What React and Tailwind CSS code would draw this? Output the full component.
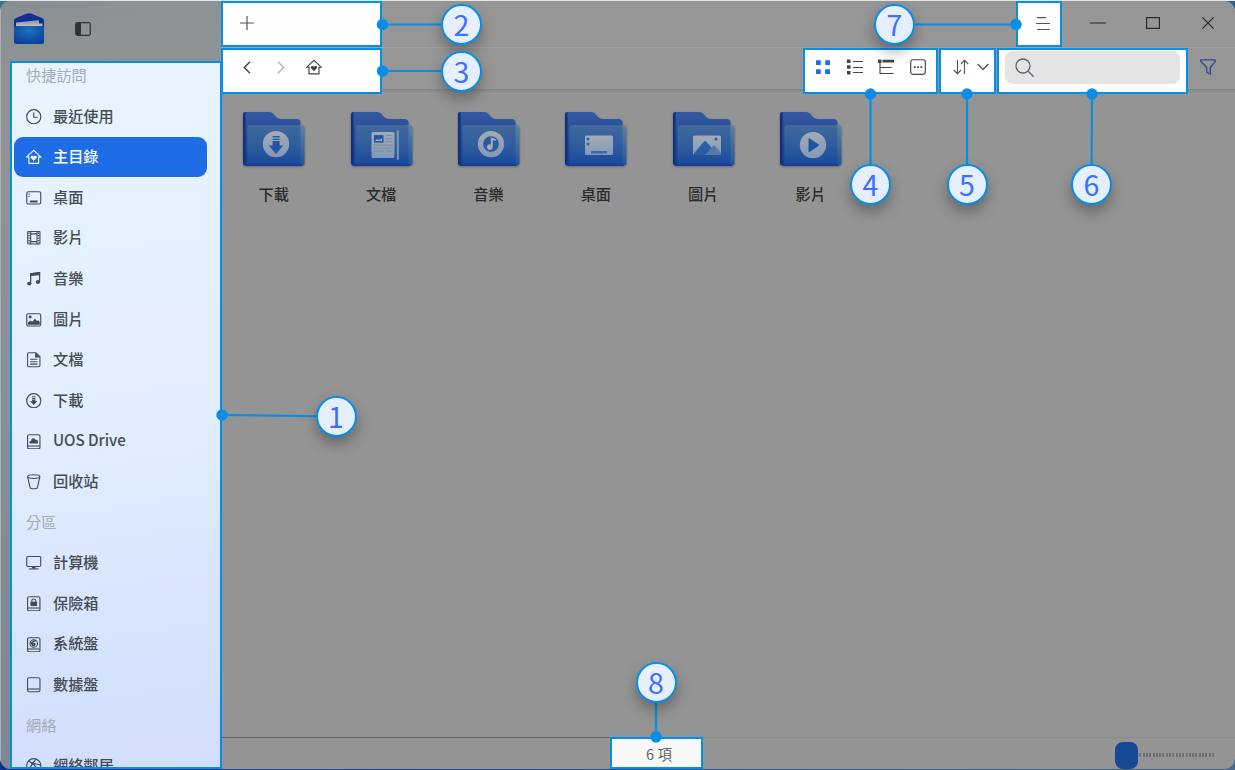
import React from "react";

const Icon = ({ children, className = "size-4" }) => (
  <svg viewBox="0 0 16 16" fill="none" stroke="currentColor" strokeWidth="1.15" strokeLinejoin="round" className={"shrink-0 " + className}>
    {children}
  </svg>
);

const solid = { fill: "currentColor", stroke: "none" };

const HomeShape = () => (
  <>
    <path d="M.8 8.2 8 1.3l7.2 6.9H13v6.6H3V8.2z" strokeLinejoin="miter" />
    <path {...solid} d="M8 12.2 4.9 9.1C4 7.6 6.5 6 8 7.8 9.5 6 12 7.6 11.1 9.1z" />
  </>
);

const Disk = ({ children }) => (
  <>
    <rect x="1.600" y=".8" width="12.800" height="14.400" rx="1.600" />
    <path d="M2 12.400h12" />
    {children}
  </>
);

const icons = {
  recent: (
    <>
      <circle cx="8" cy="8" r="7.3" />
      <path d="M8 3.6v4.9h4" />
    </>
  ),
  home: <HomeShape />,
  desktop: (
    <>
      <rect x=".8" y="1.8" width="14.4" height="12.6" rx="1.6" />
      <path {...solid} d="M4 10.800h8v2H4zM2.500 3.500h1.200v1.300H2.500zM2.500 6h1.200v1.300H2.500z" />
    </>
  ),
  video: (
    <>
      <rect x="1.8" y="1.5" width="12.6" height="13" rx=".8" />
      <path d="M4.8 1.5v13M11.4 1.5v13M4.8 4h6.6M4.8 12h6.6" />
      <path d="M3.2 2.6v11.2M13 2.6v11.2" strokeDasharray="1.2 1.4" strokeWidth="1.4" />
    </>
  ),
  music: (
    <>
      <path d="M4.8 13V2.9l9.2-1.2v9.6" strokeWidth="1.3" />
      <path {...solid} d="M4.2 2.400 14.600 1v3L4.200 5.300z" />
      <ellipse {...solid} cx="3.4" cy="13" rx="2.2" ry="2" />
      <ellipse {...solid} cx="12.3" cy="11.4" rx="2.2" ry="2" />
    </>
  ),
  picture: (
    <>
      <rect x=".8" y="1.8" width="14.4" height="12.6" rx="1.6" />
      <circle {...solid} cx="4.3" cy="5.2" r="1.5" />
      <path {...solid} d="M2 13.2v-2.5l2.7-1.8 1.7 1.2 2.8-3.2 2.2 2.3 1.2-.7 1.6 1.7v3z" />
    </>
  ),
  document: (
    <>
      <path d="M1.600 2.200Q1.600.8 3 .8H10l4.400 4.100v8.900q0 1.400-1.400 1.400H3q-1.400 0-1.400-1.400z" />
      <path {...solid} d="M9.300.8V5.700h5.100z" />
      <path d="M4.200 7.500h7.600M4.200 10h7.600M4.200 12.500h7.600" />
    </>
  ),
  download: (
    <>
      <circle cx="8" cy="8" r="7.3" />
      <path {...solid} d="M6.300 3.400h3.400v1H6.300zM6.300 5.100h3.400v1H6.300zM6.300 6.800h3.400v1.600h2L8 12.400 4.300 8.400h2z" />
    </>
  ),
  drive: (
    <Disk>
      <path {...solid} d="M4.200 9.800C2.700 9 3.700 6.800 5.200 7.200 5.200 3.800 9.200 3.400 9.900 6.100c2.200-.4 3.500 2.200 1.900 3.700z" />
    </Disk>
  ),
  trash: (
    <>
      <ellipse cx="8" cy="2.700" rx="6.300" ry="1.900" />
      <path d="M1.700 2.900 4 13q.4 2.200 2 2.200h4q1.600 0 2-2.200l2.300-10.100" />
    </>
  ),
  computer: (
    <>
      <rect x=".8" y="1.500" width="14.400" height="10.400" rx="1.200" />
      <path d="M3 14.400h10" />
      <path {...solid} d="M6.200 12h3.600v2H6.200z" />
    </>
  ),
  vault: (
    <Disk>
      <path {...solid} d="M4.600 5.800h6.800v4.500H4.600z" />
      <path d="M6 6V4.600q0-1.500 2-1.500t2 1.500V6" />
    </Disk>
  ),
  system: (
    <Disk>
      <circle cx="8" cy="6.700" r="3.900" />
      <path d="M10.300 3.800C6 4 5.500 6.800 8 6.800s1.500 2.200-1.500 2.200M5 5.200l2 3.700" strokeWidth="1.500" />
    </Disk>
  ),
  data: <Disk />,
  network: (
    <>
      <circle cx="8" cy="8" r="7.300" />
      <path d="m2.800 3.300 4 2.200 6.500 7.200M2.600 12.800 6.800 5.500l3.700-4.300M6.800 5.500 15 7.300" />
      <circle {...solid} cx="6.800" cy="5.500" r="1.300" />
    </>
  ),
};

const rows = [
  { label: "快捷訪問" },
  { label: "最近使用", icon: "recent" },
  { label: "主目錄", icon: "home", active: true },
  { label: "桌面", icon: "desktop" },
  { label: "影片", icon: "video" },
  { label: "音樂", icon: "music" },
  { label: "圖片", icon: "picture" },
  { label: "文檔", icon: "document" },
  { label: "下載", icon: "download" },
  { label: "UOS Drive", icon: "drive" },
  { label: "回收站", icon: "trash" },
  { label: "分區" },
  { label: "計算機", icon: "computer" },
  { label: "保險箱", icon: "vault" },
  { label: "系統盤", icon: "system" },
  { label: "數據盤", icon: "data" },
  { label: "網絡" },
  { label: "網絡鄰居", icon: "network" },
];

function Row({ label, icon, active }) {
  if (!icon) {
    return <div className="flex h-[40.62px] shrink-0 items-center pb-[3px] pl-3 text-[15.2px] text-[#a3abb3]">{label}</div>;
  }
  return (
    <div
      className={
        "flex h-[40.62px] w-[193px] shrink-0 items-center gap-[11.500px] rounded-[9px] pl-3 text-[15.2px] font-medium tracking-[-0.05px] " +
        (active ? "bg-[#1f6de6] text-white" : "text-[#434b53]")
      }
    >
      <Icon className="size-[15.500px]">{icons[icon]}</Icon>
      <span className="pb-[3px]">{label}</span>
    </div>
  );
}

const glyphs = {
  download: (
    <>
      <circle cx="33" cy="33" r="13.200" fill="url(#pale)" />
      <path fill="#2258a0" d="M29.600 25h7v1.400h-7zM29.600 27.600h7V29h-7zM29.600 30h7v4.500h3.600L33 42.800l-7.200-8.300h3.800z" />
    </>
  ),
  document: (
    <>
      <rect x="20.500" y="21" width="23" height="26" rx="1.500" fill="url(#pale)" />
      <rect x="23" y="24" width="9.500" height="7.500" fill="#2258a0" />
      <path d="m24 30 2-2 2 1 3-1.500V30z" fill="#a5aebd" />
      <path d="M34.500 24.500h7M34.500 27.500h7M34.500 30.500h7M23 34h18.500M23 37h18.500M23 40h10M36 40h5" stroke="#71859f" strokeWidth=".8" />
      <path d="M46.800 20v28" stroke="#7f95b5" strokeWidth="2" strokeLinecap="round" />
    </>
  ),
  music: (
    <>
      <circle cx="33" cy="33" r="13.200" fill="url(#pale)" />
      <circle cx="33" cy="33" r="7.800" fill="#275a9f" />
      <path d="M33.800 35.500v-8l4 1.500" stroke="#a5aebd" strokeWidth="2" fill="none" />
      <circle cx="31.800" cy="36" r="2.800" fill="#a5aebd" />
    </>
  ),
  desktop: (
    <>
      <rect x="20" y="24.500" width="28" height="19.500" rx="1.500" fill="url(#pale)" />
      <circle cx="23" cy="28" r="1.500" fill="#33609c" />
      <circle cx="23" cy="33" r="1.500" fill="#33609c" />
      <rect x="26" y="40" width="16" height="2.500" rx="1" fill="#3e68a5" />
    </>
  ),
  picture: (
    <>
      <rect x="20" y="24.500" width="28" height="19.500" rx="1.500" fill="url(#pale)" />
      <path d="M20.500 44v-1l10.500-12.500q1-1 2 0L45 44z" fill="#2b5da4" />
      <path d="m32 44 8-9q1-1 2 0l6 7v2z" fill="#5279ae" />
      <circle cx="43" cy="28" r="1.600" fill="#33609c" />
    </>
  ),
  video: (
    <>
      <circle cx="33" cy="34" r="13.200" fill="url(#pale)" />
      <path d="M28.500 28v12q0 1.300 1.200.6l8.700-5.600q1-1 0-1.800l-8.700-5.800q-1.200-.6-1.200.6z" fill="#2056a1" />
    </>
  ),
};

const Folder = ({ label, glyph }) => (
  <div className="flex flex-col items-center">
    <svg viewBox="0 0 62 54" className="ml-[1px] h-[54px] w-[62px] overflow-visible drop-shadow-[0_1px_1px_rgba(0,0,0,0.3)]">
      <path d="M0 3Q0 0 3 0H26Q29 0 30.500 2L33 5Q35 7 38 7H54Q57.500 7.500 57.500 10.500V53.500H3Q0 53.500 0 50.500z" fill="url(#back)" />
      <path d="M0 3Q0 0 2.500 0v53.500Q0 53 0 50.500z" fill="#12317c" />
      <path d="M55 13h3.500Q61.500 13.500 61.500 16v35q0 2.500-3 2.500H54z" fill="url(#edge)" />
      <path d="M4.500 16Q4.500 13 7.500 13H55Q57.500 13 57.500 16v37.500H3Q4.500 52 4.500 49z" fill="url(#front)" />
      <path d="M2 53.200h57" stroke="#1436a0" strokeWidth="1.200" />
      <g transform="translate(0 -.9)">{glyphs[glyph]}</g>
    </svg>
    <span className="mt-[15px] text-[15.200px] font-[450] leading-6 text-[#2b2b2b]">{label}</span>
  </div>
);

const folders = [
  ["下載", "download"],
  ["文檔", "document"],
  ["音樂", "music"],
  ["桌面", "desktop"],
  ["圖片", "picture"],
  ["影片", "video"],
];

const callouts = [
  { n: 1, x: 336, y: 416.500, dx: 222, dy: 415 },
  { n: 2, x: 461.500, y: 24.500, dx: 382.500, dy: 24.500 },
  { n: 3, x: 461.500, y: 71, dx: 382.500, dy: 71 },
  { n: 4, x: 870.500, y: 184.500, dx: 870.500, dy: 94 },
  { n: 5, x: 967, y: 184.500, dx: 967, dy: 94 },
  { n: 6, x: 1091.500, y: 184.500, dx: 1092, dy: 94 },
  { n: 7, x: 894.500, y: 24.500, dx: 1016, dy: 24.500 },
  { n: 8, x: 656, y: 682.500, dx: 656, dy: 737 },
];

const Callouts = () => (
  <div className="pointer-events-none absolute inset-0 z-20">
    <svg viewBox="0 0 1235 770" className="absolute inset-0 h-[770px] w-[1235px]">
      {callouts.map((c) => (
        <g key={c.n} stroke="#078fe8" fill="#078fe8">
          <line x1={c.x} y1={c.y} x2={c.dx} y2={c.dy} strokeWidth="2.200" />
          <circle cx={c.dx} cy={c.dy} r="5.700" stroke="none" />
        </g>
      ))}
    </svg>
    {callouts.map((c) => (
      <div
        key={c.n}
        style={{ left: c.x - 20.5, top: c.y - 20.5 }}
        className="absolute flex size-[41px] items-center justify-center rounded-full border-2 border-[#078fe8] bg-[#e6efff] text-[28.500px] leading-none text-[#3d70ff] shadow-[0_7px_14px_rgba(0,0,0,0.3)]"
      >
        {c.n}
      </div>
    ))}
  </div>
);

const box = "box-border border-2 border-[#078fe8] bg-white";

export default function App() {
  return (
    <div
      lang="zh-Hant"
      className="relative h-[770px] w-[1235px] overflow-hidden bg-[linear-gradient(to_right,#0b328c_0%,#4d6c86_100%)] pt-px font-['Noto_Sans_CJK_TC','Noto_Sans_CJK_SC',sans-serif]"
    >
      <svg className="absolute size-0" aria-hidden="true">
        <defs>
          <linearGradient id="back" x2="0" y2="1">
            <stop stopColor="#3458a0" />
            <stop offset="1" stopColor="#173c94" />
          </linearGradient>
          <linearGradient id="front" x2="0" y2="1">
            <stop stopColor="#41699c" />
            <stop offset=".55" stopColor="#2e5b9d" />
            <stop offset="1" stopColor="#17489a" />
          </linearGradient>
          <linearGradient id="edge" x2="0" y2="1">
            <stop stopColor="#60829e" />
            <stop offset="1" stopColor="#24539c" />
          </linearGradient>
          <linearGradient id="pale" x2="0" y2="1">
            <stop stopColor="#a5abb5" />
            <stop offset="1" stopColor="#8298ba" />
          </linearGradient>
          <radialGradient id="wallet" cx=".5" cy=".25" r=".8">
            <stop stopColor="#1a74b8" />
            <stop offset="1" stopColor="#0b3a9f" />
          </radialGradient>
        </defs>
      </svg>

      <div className="absolute left-0 top-0 h-3 w-3 bg-[#416f8f]" />
      <div className="absolute right-0 top-0 h-4 w-4 bg-[#365f83]" />
      <div className="absolute inset-x-0 top-0 h-px bg-[#e5e9e8]" />

      <div className="relative flex h-[768px] overflow-hidden rounded-[11px] bg-[#949494]">
        <aside className="z-10 flex w-[221px] shrink-0 flex-col border-l border-[#aeb1b3] bg-[linear-gradient(165deg,#878f95_0%,#909395_10%,#8a9298_35%,#7c8592_100%)]">
          <header className="flex h-[60px] shrink-0 items-start pl-[13px]">
            <svg viewBox="0 0 30 31" className="mt-[12px] h-[31px] w-[30px]">
              <path d="M0 7.500Q0 6 1.500 5.300L13 .6q2-.8 4 0l11.500 4.700Q30 6 30 7.500V15H0z" fill="#132e91" />
              <path d="m2 9.500 22-2.200q1 0 1 1V12H2z" fill="#98a4ac" />
              <path d="M2 10.500h26.500v3H2z" fill="#b4b9bc" />
              <path d="M0 13.300h30v15.200Q30 31 27.500 31h-25Q0 31 0 28.500z" fill="url(#wallet)" />
            </svg>
            <svg viewBox="0 0 16 14" className="ml-[31px] mt-[20.500px] h-[14px] w-4" fill="none">
              <rect x=".7" y=".7" width="14.600" height="12.600" rx="1.800" stroke="#303336" strokeWidth="1.200" />
              <path d="M1 1h5v12H1z" fill="#303336" />
            </svg>
          </header>
          <nav className="-mr-px ml-[9px] flex h-[708px] flex-col overflow-hidden border-2 border-[#078fe8] bg-[linear-gradient(172deg,#e8f4ff_0%,#e0eefe_52%,#d5e2fd_84%,#d2defc_100%)] pl-[2px]">
            <div className="-mt-[7.500px] flex flex-col">
              {rows.map((r) => (
                <Row key={r.label} {...r} />
              ))}
            </div>
          </nav>
        </aside>

        <main className="flex min-w-0 flex-1 flex-col">
          <div className="flex h-[46px] shrink-0 items-stretch bg-[#969696]">
            <div className={box + " flex w-[161px] items-center pl-[16px] text-[#555]"}>
              <svg viewBox="0 0 14 14" className="mb-[2px] ml-[1px] size-[14px]" stroke="currentColor" strokeWidth="1.200">
                <path d="M7 0v14M0 7h14" />
              </svg>
            </div>
            <div className={box + " ml-auto flex w-[46px] items-center justify-center text-[#555]"}>
              <svg viewBox="0 0 14 14" className="ml-[8px] size-[14px]" stroke="currentColor" strokeWidth="1.200">
                <path d="M1 .700h9M0 6.500h14M1 12.500h12.500" />
              </svg>
            </div>
            <div className="ml-[8px] flex w-[165px] pb-[2px] text-[#292929]">
              <div className="flex w-[55px] items-center justify-center">
                <svg viewBox="0 0 16 16" className="mb-[1px] size-4" stroke="currentColor" strokeWidth="1.100">
                  <path d="M0 8h16" />
                </svg>
              </div>
              <div className="flex w-[55px] items-center justify-center">
                <svg viewBox="0 0 14 12" className="h-3 w-[14px]" fill="none" stroke="currentColor" strokeWidth="1.200">
                  <rect x=".6" y=".6" width="12.800" height="10.800" />
                </svg>
              </div>
              <div className="flex w-[55px] items-center justify-center">
                <svg viewBox="0 0 12 12" className="size-3" stroke="currentColor" strokeWidth="1.200">
                  <path d="m.4.4 11.200 11.200M11.600.4.4 11.600" />
                </svg>
              </div>
            </div>
          </div>

          <div className="flex h-[47px] shrink-0 items-stretch border-t border-[#a0a0a0] bg-[linear-gradient(to_bottom,#969696_0,#969696_41px,#858585_41px,#8e8e8e_43px,#949494_45px,#9a9a9a_46px)]">
            <div className={box + " flex w-[161px] items-center pb-[8px] pl-[20px] text-[#444]"}>
              <svg viewBox="0 0 8 13" className="h-[13px] w-2" fill="none" stroke="currentColor" strokeWidth="1.400">
                <path d="m7 .8-5.700 5.700L7 12.200" />
              </svg>
              <svg viewBox="0 0 8 13" className="ml-[26px] h-[13px] w-2 text-[#b5b5b5]" fill="none" stroke="currentColor" strokeWidth="1.400">
                <path d="m1 .8 5.700 5.700L1 12.200" />
              </svg>
              <Icon className="ml-[21px] size-4">{icons.home}</Icon>
            </div>

            <div className={box + " ml-auto flex w-[135px] items-center justify-between pb-[9px] pl-[10px] pr-[10px] text-[#444]"}>
              <Icon className="size-4 text-[#1f6de6]">
                <path {...solid} d="M1 1.300h4.800v4.800H1zM10.200 1.300H15v4.800h-4.800zM1 10.300h4.800v4.800H1zM10.200 10.300H15v4.800h-4.800z" />
              </Icon>
              <Icon className="size-4">
                <path {...solid} d="M0 .6h3.500v3.500H0zM0 6.300h3.500v3.500H0zM0 12h3.500v3.500H0z" />
                <path d="M6 2.500h10M6 8.500h10M6 13.500h10" />
              </Icon>
              <Icon className="size-4">
                <path {...solid} d="M0 .5h3.500V4H0zM4.500.8H16v2.800H4.500z" />
                <path d="M2 4v10.500h13.500M2 8.500h11.500" />
              </Icon>
              <Icon className="size-4">
                <rect x=".7" y=".7" width="14.600" height="14.600" rx="2.200" />
                <path {...solid} d="M3.800 7.200h1.800v1.700H3.800zM7.100 7.200h1.800v1.700H7.100zM10.400 7.200h1.800v1.700h-1.800z" />
              </Icon>
            </div>

            <div className={box + " ml-px flex w-[57px] items-center pb-[8px] pl-[12px] text-[#555]"}>
              <Icon className="size-4">
                <path d="M4.500 1v13.700L.7 11M11.500 15V1.300M7.900 5l3.600-3.700L15.300 5M4.500 14.700 8.100 11" strokeLinejoin="miter" />
              </Icon>
              <svg viewBox="0 0 12 8" className="ml-[8px] h-2 w-3 shrink-0" fill="none" stroke="currentColor" strokeWidth="1.400">
                <path d="m.6 1 5.400 5.600L11.400 1" />
              </svg>
            </div>

            <div className={box + " ml-px flex w-[191px] items-start pl-[6px] pt-px"}>
              <div className="flex h-[33px] w-[175px] items-center rounded-[8px] bg-[#e4e4e4] pl-[10px] text-[#5d6673]">
                <svg viewBox="0 0 20 20" className="size-5" fill="none" stroke="currentColor" strokeWidth="1.300">
                  <circle cx="8" cy="8" r="7" />
                  <path d="m13 13 5.700 5.700" />
                </svg>
              </div>
            </div>
            <div className="flex w-[47px] items-center pb-[8px] pl-[12px] text-[#27498b]">
              <Icon className="size-4">
                <path d="M.8.900h14.400v1.500L10.300 8.500v6.700l-3.600-2V8.500L.8 2.400z" strokeWidth="1.300" />
              </Icon>
            </div>
          </div>

          <div className="grid flex-1 grid-cols-[repeat(6,107.4px)] content-start pt-[18px]">
            {folders.map(([label, glyph]) => (
              <div key={label} className="-ml-[2px]">
                <Folder label={label} glyph={glyph} />
              </div>
            ))}
          </div>

          <footer className="flex h-8 shrink-0 items-stretch">
            <div className="w-[389px] border-t border-[#656565]" />
            <div className="flex w-[93px] items-center justify-center border-2 border-[#078fe8] bg-[#f8f8f8] pl-[5px] pt-[3px] text-[14.500px] leading-none text-[#666]">
              6 項
            </div>
            <div className="flex flex-1 items-center border-t border-[#8c8c8c] pl-[412px] pt-[3px]">
              <div className="h-[27px] w-[23px] shrink-0 rounded-[8px] bg-[#164896]" />
              <div className="h-[4px] w-[77px] bg-[repeating-linear-gradient(to_right,#949494_0,#949494_1.300px,#717171_1.300px,#717171_3.300px)]" />
            </div>
          </footer>
        </main>
      </div>
      <Callouts />
    </div>
  );
}
